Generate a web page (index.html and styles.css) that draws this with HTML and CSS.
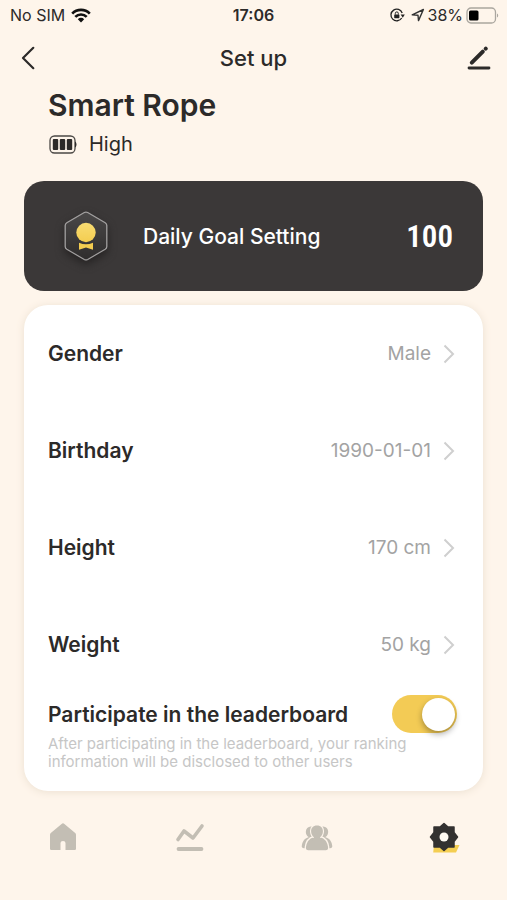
FILE: index.html
```html
<!DOCTYPE html>
<html lang="en">
<head>
<meta charset="utf-8">
<meta name="viewport" content="width=device-width, initial-scale=1">
<title>Set up</title>
<link rel="stylesheet" href="styles.css">
</head>
<body>
<div class="screen">
  <div class="status">
    <div class="status-side">
      <span>No SIM</span>
      <svg width="20" height="15" viewBox="0 0 20 15" aria-hidden="true"><g fill="none" stroke="#111" stroke-width="2.7"><path d="M1.2 5.600a12.400 12.400 0 0 1 17.600 0"/><path d="M4.300 8.900a8 8 0 0 1 11.400 0"/></g><path d="M10 14.400l-3.200-3.200a4.500 4.500 0 0 1 6.400 0z" fill="#111"/></svg>
    </div>
    <span class="clock">17:06</span>
    <div class="status-side status-right">
      <svg width="15" height="14" viewBox="0 0 15 14" aria-hidden="true"><path d="M11.700 10A5.800 5.800 0 1 1 12.200 5" fill="none" stroke="#222" stroke-width="1.300"/><path d="M10.600 6.500h4.200l-2 3.200z" fill="#222"/><rect x="4.200" y="6.400" width="5.200" height="3.800" rx=".6" fill="#222"/><path d="M5.300 6.600V5.400a1.500 1.500 0 0 1 3 0v1.200" fill="none" stroke="#222" stroke-width="1"/></svg>
      <svg class="location" width="14" height="14" viewBox="0 0 14 14" aria-hidden="true"><path d="M1.200 6.800L12.400 1.500 7.500 12.600 7 7.200z" fill="none" stroke="#333" stroke-width="1.400" stroke-linejoin="round"/></svg>
      <span>38%</span>
      <svg width="33" height="17" viewBox="0 0 33 17" aria-hidden="true"><rect x="1" y="1" width="28.500" height="15" rx="4" fill="none" stroke="#aaa69f" stroke-width="1.300"/><rect x="3" y="3.500" width="9.500" height="10" rx="1.500" fill="#000"/><path d="M31 6.500c1.600.6 1.600 3.400 0 4z" fill="#aaa69f"/></svg>
    </div>
  </div>

  <header class="nav">
    <button class="icon-button" type="button" aria-label="Back"><svg width="14" height="24" viewBox="0 0 14 24"><path d="M12.300 1.800L2 12l10.300 10.200" fill="none" stroke="#2c2a29" stroke-width="2.200" stroke-linecap="round" stroke-linejoin="round"/></svg></button>
    <h1>Set up</h1>
    <button class="icon-button" type="button" aria-label="Edit"><svg width="24" height="24" viewBox="0 0 24 24"><g fill="none" stroke="#2c2a29" stroke-linecap="round"><path d="M4.800 16.600L15.800 5.600" stroke-width="4"/><path d="M18.700 2.700l.1-.1" stroke-width="4"/><path d="M2 22h20" stroke-width="2.800"/></g></svg></button>
  </header>

  <main>
    <section class="device">
      <h2>Smart Rope</h2>
      <div class="charge">
        <svg width="28" height="19" viewBox="0 0 28 19" aria-hidden="true"><rect x="1" y="1" width="25" height="17" rx="4.500" fill="none" stroke="#4b4845" stroke-width="1.300"/><path d="M26 6.800h.6c1.200 1 1.200 4.400 0 5.400H26z" fill="#2c2a29"/><g fill="#2c2a29"><rect x="3.800" y="4" width="5.400" height="11" rx="1"/><rect x="10.800" y="4" width="5.400" height="11" rx="1"/><rect x="17.800" y="4" width="5.400" height="11" rx="1"/></g></svg>
        <span>High</span>
      </div>
    </section>

    <button class="goal" type="button">
      <svg class="medal" width="44" height="50" viewBox="0 0 44 50" aria-hidden="true">
        <defs><linearGradient id="plate" x1="0" y1="0" x2="0" y2="1"><stop offset="0" stop-color="#4a4848"/><stop offset="1" stop-color="#2f2d2d"/></linearGradient><linearGradient id="gold" x1="0" y1="0" x2="0" y2="1"><stop offset="0" stop-color="#f8dc72"/><stop offset="1" stop-color="#f4cd50"/></linearGradient></defs>
        <path d="M20.300 1.500q1.700-.9 3.400 0L41.200 11.700q1.600 1 1.600 2.800v21q0 1.800-1.600 2.800L23.700 48.500q-1.700.9-3.400 0L2.800 38.300q-1.600-1-1.600-2.800v-21q0-1.800 1.600-2.800z" fill="url(#plate)" stroke="#a3a1a1" stroke-width="1.300"/>
        <circle cx="22" cy="21.500" r="9.700" fill="url(#gold)"/><path d="M15 31.800q7 3 14 0v7L22 36.500 15 38.800z" fill="#f4cd50"/>
      </svg>
      <span class="goal-name">Daily Goal Setting</span>
      <span class="goal-value">100</span>
    </button>

    <section class="panel">
      <button class="row" type="button"><span class="name">Gender</span><span class="value">Male</span><svg class="chevron" viewBox="0 0 12 20"><path d="M1.500 1.500L10 10l-8.500 8.500"/></svg></button>
      <button class="row" type="button"><span class="name">Birthday</span><span class="value">1990-01-01</span><svg class="chevron" viewBox="0 0 12 20"><path d="M1.500 1.500L10 10l-8.500 8.500"/></svg></button>
      <button class="row" type="button"><span class="name">Height</span><span class="value">170 cm</span><svg class="chevron" viewBox="0 0 12 20"><path d="M1.500 1.500L10 10l-8.500 8.500"/></svg></button>
      <button class="row" type="button"><span class="name">Weight</span><span class="value">50 kg</span><svg class="chevron" viewBox="0 0 12 20"><path d="M1.500 1.500L10 10l-8.500 8.500"/></svg></button>
      <div class="share">
        <label class="name" for="leaderboard">Participate in the leaderboard</label>
        <input class="switch" id="leaderboard" type="checkbox" role="switch" aria-describedby="note" checked>
      </div>
      <p class="note" id="note">After participating in the leaderboard, your ranking information will be disclosed to other users</p>
    </section>
  </main>

  <nav class="tabs">
    <a href="#home" aria-label="Home"><svg width="32" height="32" viewBox="0 0 32 32"><path d="M14.600 2.900q1.400-1.200 2.800 0l10.800 9q.8.700.8 1.800v14.100q0 1.200-1.200 1.200H18.500v-7q0-2-2.500-2t-2.500 2v7H4.200Q3 29 3 27.800V13.700q0-1.100.8-1.800z" fill="#c3beb4"/></svg></a>
    <a href="#statistics" aria-label="Statistics"><svg width="32" height="32" viewBox="0 0 32 32"><g fill="none" stroke="#c3beb4" stroke-linecap="round" stroke-linejoin="round"><path d="M4 18.500l6-8.500 9 7L28 5" stroke-width="3.600"/><path d="M4.500 28h23" stroke-width="3.800"/></g></svg></a>
    <a href="#friends" aria-label="Friends"><svg width="32" height="32" viewBox="0 0 32 32"><g fill="#c3beb4"><path d="M8 16C3 17.500.8 21.500.8 25.500q0 1.700 2 1.700H14V16z"/><path d="M24 16c5 1.500 7.200 5.500 7.200 9.500q0 1.700-2 1.700H18V16z"/><ellipse cx="9.800" cy="11" rx="5" ry="5.500"/><ellipse cx="22.200" cy="11" rx="5" ry="5.500"/></g><path d="M12.500 15.500c-5.500 1.500-7.500 5.500-8.200 10.500q-.4 4 3 4h17.400q3.400 0 3-4c-.7-5-2.700-9-8.200-10.500z" fill="#c3beb4" stroke="#fef5eb" stroke-width="1.300"/><path d="M16 3.500c-5 0-7 3-7 6.800 0 3 1.300 5.200 3 6.700h8c1.700-1.500 3-3.700 3-6.700 0-3.800-2-6.800-7-6.800z" fill="#fef5eb"/><path d="M16 4.500c-4 0-5.900 2.500-5.900 5.800 0 2.700 1.200 4.700 2.900 6l-2 3h10l-2-3c1.700-1.300 2.900-3.300 2.900-6 0-3.300-1.900-5.800-5.900-5.800z" fill="#c3beb4"/></svg></a>
    <a href="#settings" aria-label="Settings" aria-current="page"><svg width="32" height="32" viewBox="0 0 32 32"><path d="M6 24h25.500l-3.500 7.500H5.200z" fill="#f4ce52"/><path d="M16 2.500l4 3.500h6v5.500l3.500 4.500-3.500 4.500V26h-6l-4 3.500L12 26H6v-5.500L2.500 16 6 11.500V6h6z" fill="#333130" stroke="#333130" stroke-width="1.500" stroke-linejoin="round"/><circle cx="16" cy="16" r="4.500" fill="#fffaf2"/></svg></a>
  </nav>
</div>
</body>
</html>
```
FILE: styles.css
```css
* { box-sizing: border-box; }
body {
  margin: 0;
  background: #fef5eb;
  color: #2c2a29;
  font-family: Inter, "Liberation Sans", sans-serif;
}
button {
  border: 0;
  padding: 0;
  background: none;
  color: inherit;
  font: inherit;
  text-align: left;
  cursor: pointer;
}
h1, h2, p { margin: 0; }
svg { display: block; flex: none; overflow: visible; }
.screen { min-height: 100vh; }

.status {
  display: grid;
  grid-template-columns: 1fr auto 1fr;
  align-items: center;
  height: 30px;
  padding: 0 8px;
  font-size: 16px;
}
.status-side { display: flex; align-items: center; gap: 6px; padding-left: 2px; }
.status-right { justify-content: flex-end; gap: 3px; padding-left: 0; }
.clock { font-weight: 600; }
.location { margin-left: 3px; }

.nav {
  display: grid;
  grid-template-columns: 24px 1fr 24px;
  align-items: center;
  height: 56px;
  padding: 0 16px;
}
.icon-button { display: flex; justify-content: center; }
.nav h1 { font-size: 22px; font-weight: 500; text-align: center; }

.device { padding: 0 48px; height: 95px; }
h2 { font-size: 30px; line-height: 38px; font-weight: 600; }
.charge {
  display: flex;
  align-items: center;
  gap: 12px;
  margin-top: 6px;
  padding-left: 1px;
  font-size: 20px;
  line-height: 28px;
}

.goal {
  display: flex;
  align-items: center;
  width: calc(100% - 48px);
  height: 110px;
  margin: 0 24px;
  padding: 0 30px 0 40px;
  border-radius: 20px;
  background: #3b3838;
  color: #fff;
}
.medal { filter: drop-shadow(0 4px 4px #252323); }
.goal-name { margin-left: 35px; font-size: 21px; font-weight: 500; }
.goal-value {
  margin-left: auto;
  font-family: "Roboto Condensed", Roboto, sans-serif;
  font-size: 31px;
  font-weight: 600;
}

.panel {
  margin: 14px 24px 0;
  padding: 0 24px 20px;
  border-radius: 24px;
  background: #fff;
  box-shadow: 0 1px 8px #ece0d1;
}
.row { display: flex; align-items: center; width: 100%; height: 97px; }
.name { font-size: 21px; font-weight: 600; }
.value { margin-left: auto; color: #a3a3a3; font-size: 19px; }
.chevron {
  width: 12px;
  height: 20px;
  margin: 0 4px 0 12px;
  fill: none;
  stroke: #cfcfcf;
  stroke-width: 2;
}
.share {
  display: flex;
  align-items: center;
  justify-content: space-between;
  height: 42px;
}
.switch {
  appearance: none;
  display: flex;
  align-items: center;
  justify-content: flex-end;
  width: 65px;
  height: 38px;
  margin: 0 2px 0 0;
  padding: 0 2px;
  border-radius: 19px;
  background: #f3cb55;
}
.switch::before {
  content: "";
  width: 33px;
  height: 33px;
  border-radius: 50%;
  background: #fff;
  box-shadow: 0 3px 6px #00000055;
}
.switch:not(:checked) { justify-content: flex-start; background: #ddd; }
.note {
  max-width: 380px;
  color: #c6c6c6;
  font-size: 15px;
  line-height: 18px;
}

.tabs {
  display: grid;
  grid-template-columns: repeat(4, 1fr);
  justify-items: center;
  align-items: center;
  height: 92px;
}
```
